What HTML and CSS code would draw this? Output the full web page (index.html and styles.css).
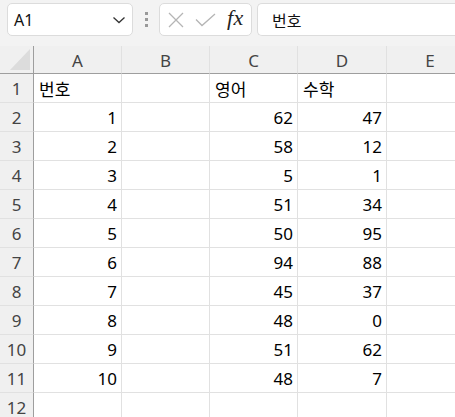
FILE: index.html
```html
<!DOCTYPE html>
<html lang="ko">
<head>
<meta charset="utf-8">
<link rel="stylesheet" href="styles.css">
</head>
<body>
<div class="toolbar">
  <div class="namebox"><span class="name">A1</span>
    <svg class="chev" width="14" height="8" viewBox="0 0 14 8"><path d="M1.5 1.5 L7 6.5 L12.5 1.5" fill="none" stroke="#333" stroke-width="1.3"/></svg>
  </div>
  <div class="dots"><i></i><i></i><i></i></div>
  <div class="fbtns">
    <svg class="ix" width="16" height="16" viewBox="0 0 16 16"><path d="M1 1 L15 15 M15 1 L1 15" stroke="#b5b5b5" stroke-width="1.3" fill="none"/></svg>
    <svg class="ick" width="21" height="14" viewBox="0 0 21 14"><path d="M1 6.5 L7 12.5 L20 1" stroke="#b5b5b5" stroke-width="1.3" fill="none"/></svg>
    <span class="fx">fx</span>
  </div>
  <div class="finput">번호</div>
</div>
<div class="sheet">
  <div class="corner"><span class="tri"></span></div>
  <div class="ch">A</div><div class="ch">B</div><div class="ch">C</div><div class="ch">D</div><div class="ch">E</div>

  <div class="rh">1</div><div class="c">번호</div><div class="c"></div><div class="c">영어</div><div class="c">수학</div><div class="c"></div>
  <div class="rh">2</div><div class="c n">1</div><div class="c"></div><div class="c n">62</div><div class="c n">47</div><div class="c"></div>
  <div class="rh">3</div><div class="c n">2</div><div class="c"></div><div class="c n">58</div><div class="c n">12</div><div class="c"></div>
  <div class="rh">4</div><div class="c n">3</div><div class="c"></div><div class="c n">5</div><div class="c n">1</div><div class="c"></div>
  <div class="rh">5</div><div class="c n">4</div><div class="c"></div><div class="c n">51</div><div class="c n">34</div><div class="c"></div>
  <div class="rh">6</div><div class="c n">5</div><div class="c"></div><div class="c n">50</div><div class="c n">95</div><div class="c"></div>
  <div class="rh">7</div><div class="c n">6</div><div class="c"></div><div class="c n">94</div><div class="c n">88</div><div class="c"></div>
  <div class="rh">8</div><div class="c n">7</div><div class="c"></div><div class="c n">45</div><div class="c n">37</div><div class="c"></div>
  <div class="rh">9</div><div class="c n">8</div><div class="c"></div><div class="c n">48</div><div class="c n">0</div><div class="c"></div>
  <div class="rh">10</div><div class="c n">9</div><div class="c"></div><div class="c n">51</div><div class="c n">62</div><div class="c"></div>
  <div class="rh">11</div><div class="c n">10</div><div class="c"></div><div class="c n">48</div><div class="c n">7</div><div class="c"></div>
  <div class="rh">12</div><div class="c"></div><div class="c"></div><div class="c"></div><div class="c"></div><div class="c"></div>
</div>
</body>
</html>
```
FILE: styles.css
```css
html, body {
  margin: 0;
  padding: 0;
  width: 455px;
  height: 417px;
  overflow: hidden;
  background: #fff;
  font-family: "Noto Sans", "Noto Sans CJK KR", sans-serif;
  color: #000;
}
.toolbar {
  height: 46px;
  background: #f3f3f3;
  display: flex;
  align-items: flex-start;
  padding-top: 3px;
  box-sizing: border-box;
}
.namebox {
  margin-left: 7px;
  width: 126px;
  height: 33px;
  box-sizing: border-box;
  background: #fff;
  border: 1px solid #dcdcdc;
  border-radius: 5px;
  display: flex;
  align-items: center;
  justify-content: space-between;
  padding: 0 6px 0 6px;
}
.name {
  font-size: 16px;
  color: #111;
}
.chev { margin-top: 1px; }
.dots {
  width: 26px;
  height: 33px;
  display: flex;
  flex-direction: column;
  align-items: center;
  justify-content: center;
  gap: 3px;
}
.dots i {
  display: block;
  width: 3px;
  height: 3px;
  background: #999;
}
.fbtns {
  width: 93px;
  height: 33px;
  box-sizing: border-box;
  background: #fff;
  border: 1px solid #dcdcdc;
  border-radius: 5px;
  display: flex;
  align-items: center;
  padding-left: 8px;
}
.ix { margin-right: 11px; }
.ick { margin-right: 11px; margin-top: 1px; }
.fx {
  font-family: "Liberation Serif", "DejaVu Serif", serif;
  font-style: italic;
  font-size: 22px;
  color: #222;
  letter-spacing: 0.5px;
  margin-top: -4px;
}
.finput {
  margin-left: 5px;
  flex: 1;
  height: 33px;
  box-sizing: border-box;
  background: #fff;
  border: 1px solid #dcdcdc;
  border-right: none;
  border-radius: 5px 0 0 5px;
  display: flex;
  align-items: center;
  padding-left: 14px;
  font-size: 16px;
  color: #111;
}
.sheet {
  display: grid;
  width: 474px;
  grid-template-columns: 34px 88px 88px 88px 89px 87px;
  grid-template-rows: 28px repeat(12, 29px);
}
.sheet > div {
  box-sizing: border-box;
  border-right: 1px solid #e1e1e1;
  border-bottom: 1px solid #e1e1e1;
}
.corner, .ch {
  background: #f0f0f0;
  border-bottom: 1px solid #9e9e9e !important;
}
.corner {
  border-right: 1px solid #9e9e9e !important;
  position: relative;
}
.tri {
  position: absolute;
  right: 3px;
  bottom: 3px;
  width: 0;
  height: 0;
  border-left: 20px solid transparent;
  border-bottom: 21px solid #dcdcdc;
}
.ch {
  display: flex;
  align-items: center;
  justify-content: center;
  font-size: 17px;
  color: #444;
  padding-top: 2px;
}
.rh {
  background: #f0f0f0;
  border-right: 1px solid #9e9e9e !important;
  display: flex;
  align-items: center;
  justify-content: center;
  font-size: 17px;
  color: #444;
}
.c {
  display: flex;
  align-items: center;
  padding: 0 4px 0 5px;
  font-size: 17px;
}
.n {
  justify-content: flex-end;
}
```
